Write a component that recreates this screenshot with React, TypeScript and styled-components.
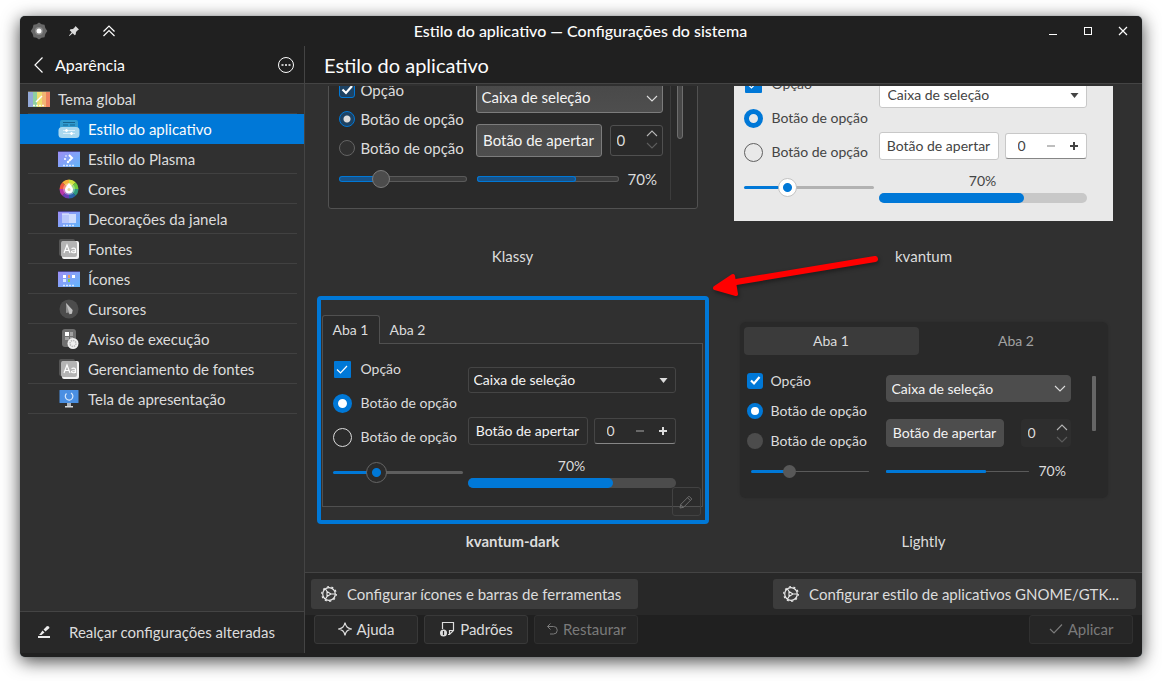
import React, { useId, useState } from "react";
import styled, { createGlobalStyle, css } from "styled-components";

const blue = "#0078d7";

const GlobalStyle = createGlobalStyle`
  *, *::before, *::after { box-sizing: border-box; }
  body {
    margin: 0;
    background: #ffffff;
    color: #dcdcdc;
    font: 15px/20px Lato, "Noto Sans", sans-serif;
  }
  button, input, select { font: inherit; color: inherit; margin: 0; }
  button { padding: 0; border: 0; background: none; }
  h1, h2, ul, figure, p { margin: 0; padding: 0; font: inherit; }
  svg { display: block; flex: none; }
`;

/* ---------- window ---------- */

const Page = styled.div`
  display: flex;
  min-height: 100vh;
  padding: 16px 20px 24px;
`;

const Window = styled.div`
  flex: 1;
  min-width: 0;
  display: flex;
  flex-direction: column;
  overflow: hidden;
  border-radius: 5px;
  background: #202020;
  box-shadow: 0 0 1px #5a6d78, 0 4px 18px rgba(0, 0, 0, 0.75);
`;

const TitleBar = styled.header`
  display: grid;
  grid-template-columns: 1fr auto 1fr;
  align-items: center;
  height: 30px;
  padding: 0 2px 0 1px;
  color: #fcfcfc;
`;

const WindowTitle = styled.h1`
  font-size: 16px;
  font-weight: 500;
`;

const TitleButtons = styled.div<{ $end?: boolean }>`
  display: flex;
  justify-content: ${(p) => (p.$end ? "flex-end" : "flex-start")};
`;

const TitleButton = styled.button`
  display: grid;
  place-items: center;
  width: 35px;
  height: 30px;
`;

const Body = styled.div`
  flex: 1;
  display: flex;
  min-height: 0;
`;

/* ---------- sidebar ---------- */

const Sidebar = styled.nav`
  display: flex;
  flex-direction: column;
  width: 285px;
  margin-bottom: 4px;
  border-right: 1px solid #444444;
  background: #303030;
`;

const SidebarHeader = styled.div`
  display: flex;
  align-items: center;
  gap: 12px;
  height: 38px;
  padding: 0 10px 0 14px;
  border-bottom: 1px solid #444444;
  background: #202020;
  color: #fcfcfc;
`;

const SidebarTitle = styled.h2`
  flex: 1;
  font-size: 16px;
`;

const PlainButton = styled.button`
  display: flex;
`;

const List = styled.ul`
  flex: 1;
  list-style: none;
`;

const Item = styled.li<{ $selected?: boolean }>`
  padding: 0 7px 0 8px;
  ${(p) => p.$selected && css`background: ${blue}; color: #fcfcfc;`}
`;

const ItemLink = styled.a<{ $child?: boolean; $selected?: boolean }>`
  display: flex;
  align-items: center;
  gap: 8px;
  height: 30px;
  padding-left: ${(p) => (p.$child ? 30 : 0)}px;
  border-bottom: 1px solid ${(p) => (p.$selected ? "transparent" : "#414141")};
  color: inherit;
  text-decoration: none;
`;

const SidebarFooter = styled.button`
  display: flex;
  align-items: center;
  gap: 18px;
  height: 42px;
  padding: 0 0 2px 17px;
  border-top: 1px solid #444444;
  background: #282828;
`;

/* ---------- main column ---------- */

const Main = styled.main`
  flex: 1;
  min-width: 0;
  display: flex;
  flex-direction: column;
`;

const MainHeader = styled.div`
  display: flex;
  align-items: center;
  height: 38px;
  padding: 0 19px;
  border-bottom: 1px solid #444444;
  color: #fcfcfc;
  font-size: 20px;
  line-height: 24px;
`;

const Content = styled.div`
  flex: 1 0 488px;
  display: flex;
  padding-top: 2px;
  background: #303030;
`;

const Viewport = styled.div`
  flex: 1;
  display: flex;
  flex-direction: column;
  justify-content: flex-end;
  height: 486px;
  align-self: flex-end;
  overflow: hidden;
`;

const Grid = styled.div`
  position: relative;
  display: grid;
  grid-template-columns: 1fr 1fr;
  row-gap: 25px;
  padding: 0 13px 16px 2px;
`;

const Card = styled.figure`
  display: flex;
  flex-direction: column;
  align-items: center;
  gap: 7px;
`;

const Frame = styled.div<{ $selected?: boolean }>`
  position: relative;
  width: 392px;
  height: 228px;
  border: 4px solid ${(p) => (p.$selected ? blue : "transparent")};
  border-radius: 4px;
`;

const Caption = styled.figcaption<{ $selected?: boolean }>`
  height: 25px;
  line-height: 20px;
  font-weight: ${(p) => (p.$selected ? 700 : 400)};
`;

const EditButton = styled.button`
  position: absolute;
  right: 4px;
  bottom: 4px;
  display: grid;
  place-items: center;
  width: 29px;
  height: 29px;
  border: 1px solid #424242;
  border-radius: 3px;
  color: #6c6c6c;
`;

const Pointer = styled.svg`
  position: absolute;
  left: calc(50% - 16px);
  bottom: 274px;
  filter: drop-shadow(1px 2px 2px rgba(0, 0, 0, 0.4));
`;

const ActionBar = styled.div`
  display: flex;
  justify-content: space-between;
  padding: 6px;
  border-top: 1px solid #444444;
  background: #282828;
`;

const ActionButton = styled.button`
  display: flex;
  align-items: center;
  gap: 10px;
  height: 30px;
  padding: 0 17px 0 10px;
  border-radius: 3px;
  background: #3c3c3c;
`;

const DialogBar = styled.div`
  display: flex;
  gap: 6px;
  height: 42px;
  padding: 0 9px;
`;

const DialogButton = styled.button<{ $end?: boolean }>`
  display: flex;
  align-items: center;
  justify-content: center;
  gap: 5px;
  width: 104px;
  height: 29px;
  padding-bottom: 2px;
  margin-left: ${(p) => (p.$end ? "auto" : 0)};
  border: 1px solid #393939;
  border-radius: 3px;
  background: #292929;
  &:disabled { color: #7a7a7a; border-color: #303030; background: #262626; }
`;

/* ---------- style previews ---------- */

type Look = "klassy" | "light" | "dark" | "lightly";

interface Palette {
  panel: string;
  text: string;
  font: number;
  row: number;
  slot: number;
  gap: number;
  left: number;
  right: number;
  button: string;
  buttonBorder: string;
  radius: number;
  control: number;
  buttonHeight: number;
  buttonWidth: number;
  spinWidth: number;
  track: string;
  trackHeight: number;
  thumb: number;
}

const looks: Record<Look, Palette> = {
  klassy: {
    panel: "#2a2a2a", text: "#dcdcdc", font: 15, row: 29, slot: 16, gap: 6, left: 128, right: 187,
    button: "linear-gradient(#494949, #4e4e4e)", buttonBorder: "#7c7c7c", radius: 3, control: 30,
    buttonHeight: 33, buttonWidth: 126, spinWidth: 53, track: "#3c3c3c", trackHeight: 6, thumb: 18,
  },
  light: {
    panel: "#e9e9e9", text: "#444444", font: 14, row: 34, slot: 19, gap: 9, left: 130, right: 208,
    button: "#ffffff", buttonBorder: "#c8c8c8", radius: 3, control: 26,
    buttonHeight: 28, buttonWidth: 120, spinWidth: 82, track: "#b2b2b2", trackHeight: 3, thumb: 19,
  },
  dark: {
    panel: "#2b2b2b", text: "#dcdcdc", font: 14, row: 34, slot: 19, gap: 9, left: 130, right: 208,
    button: "#2b2b2b", buttonBorder: "#454545", radius: 3, control: 26,
    buttonHeight: 28, buttonWidth: 120, spinWidth: 82, track: "#5e5e5e", trackHeight: 3, thumb: 21,
  },
  lightly: {
    panel: "#292929", text: "#dcdcdc", font: 14, row: 30, slot: 16, gap: 8, left: 122, right: 185,
    button: "#4d4d4d", buttonBorder: "#4d4d4d", radius: 4, control: 27,
    buttonHeight: 28, buttonWidth: 118, spinWidth: 50, track: "#4c4c4c", trackHeight: 3, thumb: 13,
  },
};

const Sample = styled.div<{ $look: Look }>`
  display: flex;
  color: ${(p) => looks[p.$look].text};
  font-size: ${(p) => looks[p.$look].font}px;
`;

const KlassyBox = styled(Sample)`
  align-items: flex-end;
  width: 370px;
  height: 170px;
  margin: 24px 0 0 7px;
  padding: 0 10px 13px;
  border: 1px solid #515151;
  border-radius: 3px;
  background: ${looks.klassy.panel};
`;

const KlassyDivider = styled.div`
  width: 1px;
  height: 150px;
  margin: 0 6px -5px 7px;
  background: #3c3c3c;
`;

const ScrollBar = styled.div<{ $look: "klassy" | "lightly" }>`
  ${(p) =>
    p.$look === "klassy"
      ? css`
          width: 6px;
          height: 90px;
          margin-bottom: 56px;
          border: 1px solid #6e6e6e;
          border-radius: 3px;
          background: #484848;
        `
      : css`
          width: 4px;
          height: 55px;
          margin: 10px 0 0 21px;
          border-radius: 1px;
          background: #666666;
        `}
`;

const TabRow = styled.div`
  display: flex;
  margin: 15px 2px 0 1px;
  font-size: 14px;
`;

const FolderTab = styled.button<{ $active?: boolean }>`
  position: relative;
  height: 28px;
  padding: 0 9px;
  border: 1px solid transparent;
  border-bottom: 0;
  border-radius: 3px 3px 0 0;
  ${(p) => p.$active && css`
    width: 58px;
    border-color: #505050;
    background: ${looks.dark.panel};
    &::after {
      content: "";
      position: absolute;
      left: 0;
      right: 0;
      bottom: -1px;
      height: 1px;
      background: ${looks.dark.panel};
    }
  `}
`;

const KvantumBox = styled(Sample)`
  gap: 5px;
  height: 164px;
  margin: ${(p) => (p.$look === "light" ? "43px 2px 0 1px" : "0 2px 0 1px")};
  padding: 0 10px;
  border: 1px solid ${(p) => (p.$look === "light" ? "transparent" : "#505050")};
  background: ${(p) => looks[p.$look].panel};
  background-clip: padding-box;
`;

const LightlyBox = styled.div`
  width: 368px;
  height: 176px;
  margin: 22px 0 0 8px;
  padding: 5px 4px 0;
  border-radius: 6px;
  background: ${looks.lightly.panel};
  box-shadow: 0 0 3px rgba(0, 0, 0, 0.15);
  font-size: 14px;
`;

const LightlyTabs = styled.div`
  display: grid;
  grid-template-columns: 1fr 1fr;
  gap: 10px;
`;

const PillTab = styled.button<{ $active?: boolean }>`
  height: 28px;
  border-radius: 4px;
  color: ${(p) => (p.$active ? "#dcdcdc" : "#a2a2a2")};
  background: ${(p) => (p.$active ? "#3b3b3b" : "transparent")};
`;

const LightlyBody = styled(Sample)`
  align-items: flex-start;
  padding: 11px 0 0 3px;
`;

const Options = styled.div<{ $look: Look }>`
  display: flex;
  flex-direction: column;
  width: ${(p) => looks[p.$look].left}px;
  padding-top: ${(p) => (looks[p.$look].row === 34 ? 8 : 0)}px;
`;

const Option = styled.label<{ $look: Look }>`
  display: grid;
  grid-template-columns: ${(p) => looks[p.$look].slot}px auto;
  align-items: center;
  justify-content: start;
  justify-items: center;
  gap: ${(p) => looks[p.$look].gap}px;
  height: ${(p) => looks[p.$look].row}px;
  white-space: nowrap;
`;

const CheckStack = styled.span`
  display: grid;
  place-items: center;
  & > * { grid-area: 1 / 1; }
`;

const Check = styled.input<{ $look: Look }>`
  appearance: none;
  width: ${(p) => (looks[p.$look].row === 34 ? 17 : 16)}px;
  height: ${(p) => (looks[p.$look].row === 34 ? 17 : 16)}px;
  border-radius: ${(p) => (looks[p.$look].row === 34 ? 1 : 3)}px;
  background: ${blue};
  ${(p) => p.$look === "klassy" && css`border: 1px solid ${blue}; background: #1d4263;`}
`;

const Tick = styled.svg`
  pointer-events: none;
`;

const Radio = styled.input<{ $look: Look }>`
  appearance: none;
  width: ${(p) => looks[p.$look].slot}px;
  height: ${(p) => looks[p.$look].slot}px;
  border-radius: 50%;
  ${(p) => {
    switch (p.$look) {
      case "klassy":
        return css`
          border: 1px solid #646464;
          background: #303030;
          &:checked {
            border-color: ${blue};
            background: radial-gradient(circle, #dcdcdc 3px, #1d4263 4px);
          }
        `;
      case "light":
        return css`
          border: 1px solid #606060;
          &:checked { border: 5px solid ${blue}; }
        `;
      case "dark":
        return css`
          border: 1px solid #dcdcdc;
          &:checked { border: 5px solid ${blue}; background: #ffffff; }
        `;
      default:
        return css`
          background: #4c4c4c;
          &:checked { border: 4px solid ${blue}; background: #ffffff; }
        `;
    }
  }}
`;

const thumbLooks: Record<Look, ReturnType<typeof css>> = {
  klassy: css`border: 1px solid #7c7c7c; background: #4c4c4c;`,
  light: css`border: 1px solid #c4c4c4; background: radial-gradient(circle, ${blue} 4px, #ffffff 5px);`,
  dark: css`border: 1px solid #666666; background: radial-gradient(circle, ${blue} 4px, #2b2b2b 5px);`,
  lightly: css`background: #585858;`,
};

const Slider = styled.input<{ $look: Look }>`
  appearance: none;
  display: block;
  width: 100%;
  height: ${(p) => (p.$look === "klassy" ? 32 : looks[p.$look].row)}px;
  margin-top: ${(p) => (p.$look === "lightly" ? 0 : 1)}px;
  padding: 0 ${(p) => (p.$look === "lightly" ? "0 0 2px" : "0")};
  background: none;
  &::-webkit-slider-runnable-track {
    height: ${(p) => looks[p.$look].trackHeight}px;
    border-radius: 3px;
    background: linear-gradient(
      to right,
      ${blue} 33%,
      ${(p) => looks[p.$look].track} 33%
    );
    ${(p) =>
      p.$look === "klassy" &&
      css`
        border: 1px solid transparent;
        background:
          linear-gradient(to right, #17538a 33%, #3c3c3c 33%) padding-box,
          linear-gradient(to right, ${blue} 33%, #5a5a5a 33%) border-box;
      `}
    ${(p) =>
      p.$look === "lightly" &&
      css`
        margin-left: 2px;
        background:
          linear-gradient(${blue}, ${blue}) left / 33% 3px no-repeat,
          linear-gradient(#5a5a5a, #5a5a5a) center / 100% 1px no-repeat;
      `}
  }
  &::-webkit-slider-thumb {
    appearance: none;
    width: ${(p) => looks[p.$look].thumb}px;
    height: ${(p) => looks[p.$look].thumb}px;
    margin-top: ${(p) =>
      (looks[p.$look].trackHeight - looks[p.$look].thumb) / 2 - (p.$look === "klassy" ? 1 : 0)}px;
    border-radius: 50%;
    ${(p) => thumbLooks[p.$look]}
  }
`;

const Controls = styled.div<{ $look: Look }>`
  display: flex;
  flex-direction: column;
  width: ${(p) => looks[p.$look].right}px;
  ${(p) => {
    switch (p.$look) {
      case "klassy":
        return css`gap: 11px; margin-left: 9px;`;
      case "lightly":
        return css`gap: 17px; padding-top: 9px; margin-left: 17px;`;
      default:
        return css`gap: 24px; padding-top: 23px;`;
    }
  }}
`;

const Combo = styled.div<{ $look: Look }>`
  display: grid;
  align-items: center;
  height: ${(p) => looks[p.$look].control}px;
  border: 1px solid ${(p) => looks[p.$look].buttonBorder};
  border-radius: ${(p) => looks[p.$look].radius}px;
  background: ${(p) => looks[p.$look].button};
  color: ${(p) => (p.$look === "light" ? "#444444" : "#f4f4f4")};
  & > * { grid-area: 1 / 1; }
  & > svg {
    justify-self: end;
    margin-right: ${(p) => (looks[p.$look].row === 34 ? 7 : 4)}px;
    pointer-events: none;
  }
`;

const ComboSelect = styled.select<{ $look: Look }>`
  appearance: none;
  width: 100%;
  height: 100%;
  padding: 0 ${(p) => (p.$look === "light" ? 8 : 5)}px;
  border: 0;
  background: none;
  ${(p) => p.$look === "klassy" && css`padding-bottom: 2px;`}
`;

const ButtonRow = styled.div`
  display: flex;
  align-items: center;
  justify-content: space-between;
`;

const PushButton = styled.button<{ $look: Look }>`
  width: ${(p) => looks[p.$look].buttonWidth}px;
  height: ${(p) => looks[p.$look].buttonHeight}px;
  padding-bottom: ${(p) => (p.$look === "klassy" ? 2 : 0)}px;
  border: 1px solid ${(p) => looks[p.$look].buttonBorder};
  border-radius: ${(p) => looks[p.$look].radius}px;
  background: ${(p) => looks[p.$look].button};
  color: ${(p) => (p.$look === "light" ? "#444444" : "#f4f4f4")};
  white-space: nowrap;
`;

const Spin = styled.div<{ $look: Look }>`
  display: flex;
  align-items: center;
  width: ${(p) => looks[p.$look].spinWidth}px;
  height: ${(p) => (p.$look === "klassy" ? 31 : p.$look === "lightly" ? 28 : 26)}px;
  padding: 0 4px 2px 6px;
  border: 1px solid ${(p) => (p.$look === "klassy" ? "#505050" : looks[p.$look].buttonBorder)};
  border-radius: ${(p) => looks[p.$look].radius}px;
  background: ${(p) => (p.$look === "light" ? "#ffffff" : "none")};
  ${(p) => p.$look === "lightly" && css`border: 0; padding: 0 3px 0 7px; background: #2e2e2e;`}
  ${(p) => looks[p.$look].row === 34 && css`border-bottom-color: #868686; padding: 0 6px 0 12px;`}
`;

const SpinInput = styled.input`
  flex: 1;
  min-width: 0;
  padding: 0;
  border: 0;
  outline: 0;
  background: none;
`;

const StepPair = styled.div<{ $look: Look }>`
  display: flex;
  flex-direction: ${(p) => (looks[p.$look].row === 34 ? "row" : "column")};
  gap: ${(p) => (looks[p.$look].row === 34 ? 11 : 5)}px;
`;

const ProgressRow = styled.div<{ $look: Look }>`
  ${(p) =>
    looks[p.$look].row === 34
      ? css`
          display: flex;
          flex-direction: column-reverse;
          align-items: center;
          gap: 3px;
          margin-top: -12px;
          line-height: 18px;
        `
      : css`
          display: flex;
          align-items: center;
          gap: ${p.$look === "klassy" ? 9 : 10}px;
          height: ${p.$look === "klassy" ? 32 : 30}px;
          margin-top: ${p.$look === "klassy" ? -5 : -8}px;
          margin-left: ${p.$look === "klassy" ? 1 : 0}px;
        `}
`;

const Progress = styled.progress<{ $look: Look }>`
  appearance: none;
  display: block;
  width: ${(p) => (looks[p.$look].row === 34 ? 208 : p.$look === "klassy" ? 142 : 143)}px;
  height: ${(p) => (looks[p.$look].row === 34 ? 10 : p.$look === "klassy" ? 6 : 3)}px;
  border: 0;
  &::-webkit-progress-bar {
    border-radius: 5px;
    background: ${(p) => (p.$look === "light" ? "#c8c8c8" : "#4c4c4c")};
    ${(p) => p.$look === "klassy" && css`
      background: #3c3c3c;
      box-shadow: inset 0 0 0 1px #5a5a5a;
    `}
    ${(p) => p.$look === "lightly" && css`
      background: linear-gradient(#5a5a5a, #5a5a5a) center / 100% 1px no-repeat;
    `}
  }
  &::-webkit-progress-value {
    border-radius: 5px;
    background: ${blue};
    ${(p) => p.$look === "klassy" && css`
      background: #17538a;
      box-shadow: inset 0 0 0 1px ${blue};
    `}
    ${(p) => p.$look === "lightly" && css`border-radius: 1px;`}
  }
`;

/* ---------- icons ---------- */

const Chevron = ({ up, color = "#dcdcdc" }: { up?: boolean; color?: string }) => (
  <svg width="12" height="7" viewBox="0 0 12 7" fill="none" stroke={color} strokeWidth="1.100">
    <path d={up ? "M1 6l5-5 5 5" : "M1 1l5 5 5-5"} />
  </svg>
);

const Triangle = ({ color }: { color: string }) => (
  <svg width="9" height="5" viewBox="0 0 9 5" fill={color}>
    <path d="M.5 0h8L4.500 5z" />
  </svg>
);

const Gear = () => (
  <svg width="16" height="16" viewBox="0 0 16 16" fill="none" stroke="#ececec">
    <circle cx="8" cy="8" r="6.300" strokeWidth="1.200" />
    <circle cx="8" cy="8" r="7.300" strokeWidth="1.200" strokeDasharray="2 2.587" />
    <path d="M6 5.500L10 8l-4 2.500zM10 8h4M6 5.500L4.500 3M6 10.500L4.500 13" strokeWidth="1.100" />
  </svg>
);

const Screen = ({ children }: { children: React.ReactNode }) => {
  const id = useId();
  return (
    <svg width="22" height="22" viewBox="0 0 22 22">
      <defs>
        <linearGradient id={id} x1="0" y1="0" x2="1" y2="1">
          <stop offset="0" stopColor="#9f8ef5" />
          <stop offset="1" stopColor="#62b6fb" />
        </linearGradient>
      </defs>
      <rect x="0" y="3" width="22" height="16" fill={`url(#${id})`} />
      <path d="M0 3h22v1H0z" fill="#4a4688" />
      <path d="M5 17.500h12" stroke="#d6e6ff" strokeWidth="1.500" strokeDasharray="2 1" />
      {children}
    </svg>
  );
};

const LetterTile = () => (
  <svg width="22" height="22" viewBox="0 0 22 22">
    <rect x="1" y="1" width="16" height="17" rx="2" fill="#555555" />
    <rect x="4" y="3" width="17" height="18" rx="2" fill="#f4f4f4" />
    <rect x="3" y="3" width="16" height="16" rx="2" fill="#b4b4b4" />
    <g fill="none" stroke="#ffffff" strokeWidth="1.200">
      <path d="M6 15l3-8 3 8M7 12.500h4" />
      <path d="M13.500 10.500c3-1 4 0 4 1.500v3M17.500 12.500c-3 0-4 .5-4 1.300s2.500 1.700 4 0" />
    </g>
  </svg>
);

const icons: Record<string, React.ReactNode> = {
  theme: (
    <svg width="22" height="22" viewBox="0 0 22 22">
      <path d="M0 3h5v16H0z" fill="#93a9d8" />
      <path d="M5 3h4v16H5z" fill="#8fd0a0" />
      <path d="M9 3h5v16H9z" fill="#eedd6e" />
      <path d="M14 3h4v16h-4z" fill="#f2b673" />
      <path d="M18 3h4v16h-4z" fill="#ee8361" />
      <path d="M0 3h22v1H0z" fill="#6a6658" />
      <path d="M8 14l6-6" stroke="#ffffff" strokeWidth="1.400" />
      <path d="M5 17.500h12" stroke="#fffbe0" strokeWidth="1.500" strokeDasharray="2 1" />
    </svg>
  ),
  app: (
    <svg width="22" height="22" viewBox="0 0 22 22">
      <rect x="2" y="2" width="18" height="12" rx="2" fill="#2f9bd0" />
      <path d="M5 4.500h12M5 7h5M12 7h5" stroke="#16648f" />
      <rect x="0.500" y="9" width="21" height="11" rx="3.500" fill="#a9d8ef" />
      <path d="M5 12.500h12M5 15.500h12" stroke="#d9effa" />
      <path d="M8.500 11v3M7 12.500h3M13.500 14v3M12 15.500h3" stroke="#ffffff" strokeWidth="1.300" />
    </svg>
  ),
  plasma: (
    <Screen>
      <path d="M11 7l3 3-3 3" fill="none" stroke="#ffffff" strokeWidth="2" />
      <circle cx="8" cy="8" r="0.800" fill="#fff" />
      <circle cx="7" cy="11" r="1" fill="#fff" />
      <circle cx="10" cy="14" r="1.200" fill="#fff" />
    </Screen>
  ),
  colors: (
    <svg width="22" height="22" viewBox="0 0 22 22">
      <path d="M11 11H1.500A9.500 9.500 0 0 1 4.300 4.300z" fill="#f0563c" />
      <path d="M11 11L4.300 4.300A9.500 9.500 0 0 1 11 1.500z" fill="#f6b13c" />
      <path d="M11 11V1.500A9.500 9.500 0 0 1 17.700 4.300z" fill="#cfe23e" />
      <path d="M11 11l6.700-6.700A9.500 9.500 0 0 1 20.500 11z" fill="#6fcb3d" />
      <path d="M11 11h9.500a9.500 9.500 0 0 1-2.800 6.700z" fill="#2e9a80" />
      <path d="M11 11l6.700 6.700A9.500 9.500 0 0 1 11 20.500z" fill="#2b62a8" />
      <path d="M11 11v9.500a9.500 9.500 0 0 1-6.700-2.800z" fill="#6a3fb5" />
      <path d="M11 11l-6.700 6.700A9.500 9.500 0 0 1 1.500 11z" fill="#b637a8" />
      <circle cx="11" cy="11" r="6" fill="#ffffff" opacity="0.350" />
      <path d="M11 5c2.500 3 4 4.500 4 6.500a4 4 0 0 1-8 0C7 9.500 8.500 8 11 5z" fill="#ffffff" />
      <circle cx="11" cy="11.500" r="1.500" fill="#e7d9a0" />
    </svg>
  ),
  window: (
    <Screen>
      <rect x="4" y="6" width="7" height="9" fill="#b9c8fb" />
      <rect x="11" y="6" width="7" height="9" fill="#cfdcfd" />
      <path d="M4 6h7" stroke="#e8eeff" />
    </Screen>
  ),
  fonts: <LetterTile />,
  icons: (
    <Screen>
      <path d="M5 7h3v3H5z" fill="#ffffff" />
      <path d="M10 7h2v3h-2z" fill="#f19a5b" />
      <path d="M14 7h3v3h-3z" fill="#ffffff" />
      <path d="M5 11h3v3H5z" fill="#d6e6ff" />
      <path d="M10 11h2v3h-2z" fill="#7fce50" />
    </Screen>
  ),
  cursor: (
    <svg width="22" height="22" viewBox="0 0 22 22">
      <circle cx="11" cy="11" r="9.500" fill="#4c4c4c" />
      <path d="M8 5v10l2.200-.6 1.300 1.900 2.500-.8.500-3.500z" fill="#8e8e8e" />
      <path d="M8 5l6.500 7-.5 3.500-2.300.7z" fill="#c2c2c2" />
    </svg>
  ),
  launch: (
    <svg width="22" height="22" viewBox="0 0 22 22">
      <rect x="4" y="1" width="14" height="18" rx="3" fill="#6f6f6f" />
      <path d="M7 4h4v4H7z" fill="#ffffff" />
      <path d="M12 4h3v4h-3zM7 9h4v3H7zM12 9h3v3h-3z" fill="#a2a2a2" />
      <circle cx="15" cy="15.500" r="5.500" fill="#efefef" />
      <circle cx="15" cy="15.500" r="3" fill="none" stroke="#bcbcbc" strokeWidth="1.500" strokeDasharray="1.500 0.800" />
    </svg>
  ),
  splash: (
    <svg width="22" height="22" viewBox="0 0 22 22">
      <rect x="1.500" y="2" width="19" height="13" rx="0.500" fill="#4a8fe2" />
      <path d="M9 15h4v3H9z" fill="#aeb4bb" />
      <path d="M7 18h8v1.500H7z" fill="#d4d7da" />
      <path d="M8.500 5.500A3.800 3.800 0 1 0 13 5" fill="none" stroke="#d8e8fb" strokeWidth="1.200" />
    </svg>
  ),
};

/* ---------- preview parts ---------- */

const tickPaths: Record<Look, string> = {
  klassy: "M3.500 7.500l3.500 3.500 6-7",
  light: "M3 8.500l3.500 3.500 6.500-7",
  dark: "M3 8.500l3.500 3.500 6.500-7",
  lightly: "M4 7.500l3 3L12.500 4",
};

const OptionColumn = ({ look }: { look: Look }) => {
  const group = useId();
  const kvantum = look === "light" || look === "dark";
  return (
    <Options $look={look}>
      <Option $look={look}>
        <CheckStack>
          <Check type="checkbox" defaultChecked $look={look} />
          <Tick width="16" height="16" viewBox="0 0 16 16" fill="none" stroke="#ffffff" strokeWidth={kvantum ? 1.2 : 2.2}>
            <path d={tickPaths[look]} />
          </Tick>
        </CheckStack>
        Opção
      </Option>
      <Option $look={look}>
        <Radio type="radio" name={group} defaultChecked $look={look} />
        Botão de opção
      </Option>
      <Option $look={look}>
        <Radio type="radio" name={group} $look={look} />
        Botão de opção
      </Option>
      <Slider type="range" aria-label="Controle deslizante" defaultValue={look === "klassy" ? 30 : 31} $look={look} />
    </Options>
  );
};

const ControlColumn = ({ look }: { look: Look }) => {
  const [value, setValue] = useState("0");
  const kvantum = look === "light" || look === "dark";
  const ink = looks[look].text;
  return (
    <Controls $look={look}>
      <Combo $look={look}>
        <ComboSelect aria-label="Caixa de seleção" $look={look}>
          <option>Caixa de seleção</option>
        </ComboSelect>
        {kvantum ? <Triangle color={ink} /> : <Chevron />}
      </Combo>
      <ButtonRow>
        <PushButton type="button" $look={look}>Botão de apertar</PushButton>
        <Spin $look={look}>
          <SpinInput aria-label="Valor" value={value} onChange={(e) => setValue(e.target.value)} />
          {kvantum ? (
            <StepPair $look={look}>
              <button type="button" aria-label="Diminuir">
                <svg width="12" height="12" viewBox="0 0 12 12" stroke={ink} strokeOpacity="0.350" strokeWidth="2">
                  <path d="M2 6h8" />
                </svg>
              </button>
              <button type="button" aria-label="Aumentar">
                <svg width="12" height="12" viewBox="0 0 12 12" stroke={ink} strokeWidth="2">
                  <path d="M2 6h8M6 2v8" />
                </svg>
              </button>
            </StepPair>
          ) : (
            <StepPair $look={look}>
              <button type="button" aria-label="Aumentar"><Chevron up color="#b4b4b4" /></button>
              <button type="button" aria-label="Diminuir"><Chevron color="#5c5c5c" /></button>
            </StepPair>
          )}
        </Spin>
      </ButtonRow>
      <ProgressRow $look={look}>
        <Progress value={70} max={100} aria-label="Progresso" $look={look} />
        <span>70%</span>
      </ProgressRow>
    </Controls>
  );
};

const menu = [
  { icon: "theme", label: "Tema global" },
  { icon: "app", label: "Estilo do aplicativo", selected: true },
  { icon: "plasma", label: "Estilo do Plasma" },
  { icon: "colors", label: "Cores" },
  { icon: "window", label: "Decorações da janela" },
  { icon: "fonts", label: "Fontes" },
  { icon: "icons", label: "Ícones" },
  { icon: "cursor", label: "Cursores" },
  { icon: "launch", label: "Aviso de execução" },
  { icon: "fonts", label: "Gerenciamento de fontes" },
  { icon: "splash", label: "Tela de apresentação" },
];

export default function App() {
  return (
    <>
      <GlobalStyle />
      <Page>
        <Window>
          <TitleBar>
            <TitleButtons>
              <TitleButton type="button" aria-label="Menu da janela">
                <svg width="18" height="18" viewBox="0 0 18 18">
                  <path d="M9 .5l2.500 1.700 3 .5.8 3.300 2 3-2 3-.8 3.200-3 .6L9 17.500l-2.500-1.700-3-.6-.8-3.200-2-3 2-3 .8-3.300 3-.5z" fill="#686868" />
                  <circle cx="9" cy="9" r="4" fill="#8a8a8a" />
                  <circle cx="9" cy="9" r="2.500" fill="#ffffff" />
                </svg>
              </TitleButton>
              <TitleButton type="button" aria-label="Fixar">
                <svg width="12" height="12" viewBox="0 0 12 12" fill="#dcdcdc">
                  <path d="M7.500 1l3.500 3.500-1 .5-2 2-.3 2.500-1 .8-2-2L1.500 11 1 10.500l2.700-3.200-2-2 .8-1L5 4l2-2z" />
                </svg>
              </TitleButton>
              <TitleButton type="button" aria-label="Manter acima">
                <svg width="12" height="12" viewBox="0 0 12 12" fill="none" stroke="#fcfcfc" strokeWidth="1.200">
                  <path d="M.5 6.500L6 1l5.500 5.500M.5 11L6 5.500l5.500 5.500" />
                </svg>
              </TitleButton>
            </TitleButtons>
            <WindowTitle>Estilo do aplicativo — Configurações do sistema</WindowTitle>
            <TitleButtons $end>
              <TitleButton type="button" aria-label="Minimizar">
                <svg width="10" height="10" viewBox="0 0 10 10"><path d="M1 8h8v1H1z" fill="#fcfcfc" /></svg>
              </TitleButton>
              <TitleButton type="button" aria-label="Maximizar">
                <svg width="10" height="10" viewBox="0 0 10 10" fill="none" stroke="#fcfcfc">
                  <rect x="1.500" y="1.500" width="7" height="7" />
                </svg>
              </TitleButton>
              <TitleButton type="button" aria-label="Fechar">
                <svg width="10" height="10" viewBox="0 0 10 10" stroke="#fcfcfc" strokeWidth="1.200">
                  <path d="M1 1l8 8M9 1L1 9" />
                </svg>
              </TitleButton>
            </TitleButtons>
          </TitleBar>

          <Body>
            <Sidebar>
              <SidebarHeader>
                <PlainButton type="button" aria-label="Voltar">
                  <svg width="9" height="16" viewBox="0 0 9 16" fill="none" stroke="#fcfcfc" strokeWidth="1.200">
                    <path d="M8.500 .5L1 8l7.500 7.500" />
                  </svg>
                </PlainButton>
                <SidebarTitle>Aparência</SidebarTitle>
                <PlainButton type="button" aria-label="Mais opções">
                  <svg width="16" height="16" viewBox="0 0 16 16" fill="none" stroke="#fcfcfc">
                    <circle cx="8" cy="8" r="7.500" />
                    <path d="M3.500 8h2M7 8h2M10.500 8h2" strokeWidth="1.600" />
                  </svg>
                </PlainButton>
              </SidebarHeader>
              <List>
                {menu.map((m, i) => (
                  <Item key={m.label} $selected={m.selected}>
                    <ItemLink href="#" $child={i > 0} $selected={m.selected}>
                      {icons[m.icon]}
                      {m.label}
                    </ItemLink>
                  </Item>
                ))}
              </List>
              <SidebarFooter type="button">
                <svg width="14" height="14" viewBox="0 0 14 14" fill="#ececec">
                  <path d="M1 11h12v2H1zM3 9l2.500-3.500 2 2L4.500 10H2zM6.500 4.500L10 1l2 .5.500 1.500-4 3.500z" />
                </svg>
                Realçar configurações alteradas
              </SidebarFooter>
            </Sidebar>

            <Main>
              <MainHeader><h2>Estilo do aplicativo</h2></MainHeader>
              <Content>
                <Viewport>
                  <Grid>
                    <Card>
                      <Frame>
                        <KlassyBox $look="klassy">
                          <OptionColumn look="klassy" />
                          <ControlColumn look="klassy" />
                          <KlassyDivider />
                          <ScrollBar $look="klassy" />
                        </KlassyBox>
                      </Frame>
                      <Caption>Klassy</Caption>
                    </Card>
                    <Card>
                      <Frame>
                        <KvantumBox $look="light">
                          <OptionColumn look="light" />
                          <ControlColumn look="light" />
                        </KvantumBox>
                      </Frame>
                      <Caption>kvantum</Caption>
                    </Card>
                    <Card>
                      <Frame $selected>
                        <TabRow>
                          <FolderTab type="button" $active>Aba 1</FolderTab>
                          <FolderTab type="button">Aba 2</FolderTab>
                        </TabRow>
                        <KvantumBox $look="dark">
                          <OptionColumn look="dark" />
                          <ControlColumn look="dark" />
                        </KvantumBox>
                        <EditButton type="button" aria-label="Editar">
                          <svg width="14" height="14" viewBox="0 0 14 14" fill="none" stroke="currentColor">
                            <path d="M1 13l.7-3.500L10 1.200l2.800 2.800-8.300 8.300zM8.500 2.700l2.800 2.800M1.700 9.500l2.800 2.800" />
                          </svg>
                        </EditButton>
                      </Frame>
                      <Caption $selected>kvantum-dark</Caption>
                    </Card>
                    <Card>
                      <Frame>
                        <LightlyBox>
                          <LightlyTabs>
                            <PillTab type="button" $active>Aba 1</PillTab>
                            <PillTab type="button">Aba 2</PillTab>
                          </LightlyTabs>
                          <LightlyBody $look="lightly">
                            <OptionColumn look="lightly" />
                            <ControlColumn look="lightly" />
                            <ScrollBar $look="lightly" />
                          </LightlyBody>
                        </LightlyBox>
                      </Frame>
                      <Caption>Lightly</Caption>
                    </Card>
                    <Pointer width="176" height="50" viewBox="0 0 176 50" fill="#ff0000" stroke="#ff0000" strokeLinecap="round" strokeLinejoin="round">
                      <path d="M167 11L28 34" strokeWidth="6" />
                      <path d="M7 40l18-12 3 18z" strokeWidth="4" />
                    </Pointer>
                  </Grid>
                </Viewport>
              </Content>
              <ActionBar>
                <ActionButton type="button"><Gear />Configurar ícones e barras de ferramentas</ActionButton>
                <ActionButton type="button"><Gear />Configurar estilo de aplicativos GNOME/GTK...</ActionButton>
              </ActionBar>
              <DialogBar>
                <DialogButton type="button">
                  <svg width="14" height="14" viewBox="0 0 14 14" fill="none" stroke="#dcdcdc" strokeWidth="1.200">
                    <path d="M7 .7C7.500 3 8 4 9 5s2.500 1.500 4.300 2C11.500 7.500 10 8 9 9s-1.500 2-2 4.300C6.500 11 6 10 5 9S2.500 7.500.7 7C2.500 6.500 4 6 5 5s1.500-2 2-4.300z" />
                  </svg>
                  Ajuda
                </DialogButton>
                <DialogButton type="button">
                  <svg width="16" height="16" viewBox="0 0 16 16" fill="none" stroke="#dcdcdc" strokeWidth="1.200">
                    <path d="M3.500 8V1.500h11v8l-4 4H9M14.500 9.500h-4v4" />
                    <circle cx="4.500" cy="12" r="3.500" fill="#dcdcdc" stroke="none" />
                    <path d="M4.500 10v4" stroke="#292929" />
                  </svg>
                  Padrões
                </DialogButton>
                <DialogButton type="button" disabled>
                  <svg width="12" height="14" viewBox="0 0 12 14" fill="none" stroke="currentColor">
                    <path d="M4.500 1.500L1.500 4.500l3 3M1.500 4.500h6a3.500 3.500 0 0 1 0 7.500H4" />
                  </svg>
                  Restaurar
                </DialogButton>
                <DialogButton type="button" disabled $end>
                  <svg width="14" height="12" viewBox="0 0 14 12" fill="none" stroke="currentColor" strokeWidth="1.200">
                    <path d="M1 6l4 4 8-8.500" />
                  </svg>
                  Aplicar
                </DialogButton>
              </DialogBar>
            </Main>
          </Body>
        </Window>
      </Page>
    </>
  );
}
